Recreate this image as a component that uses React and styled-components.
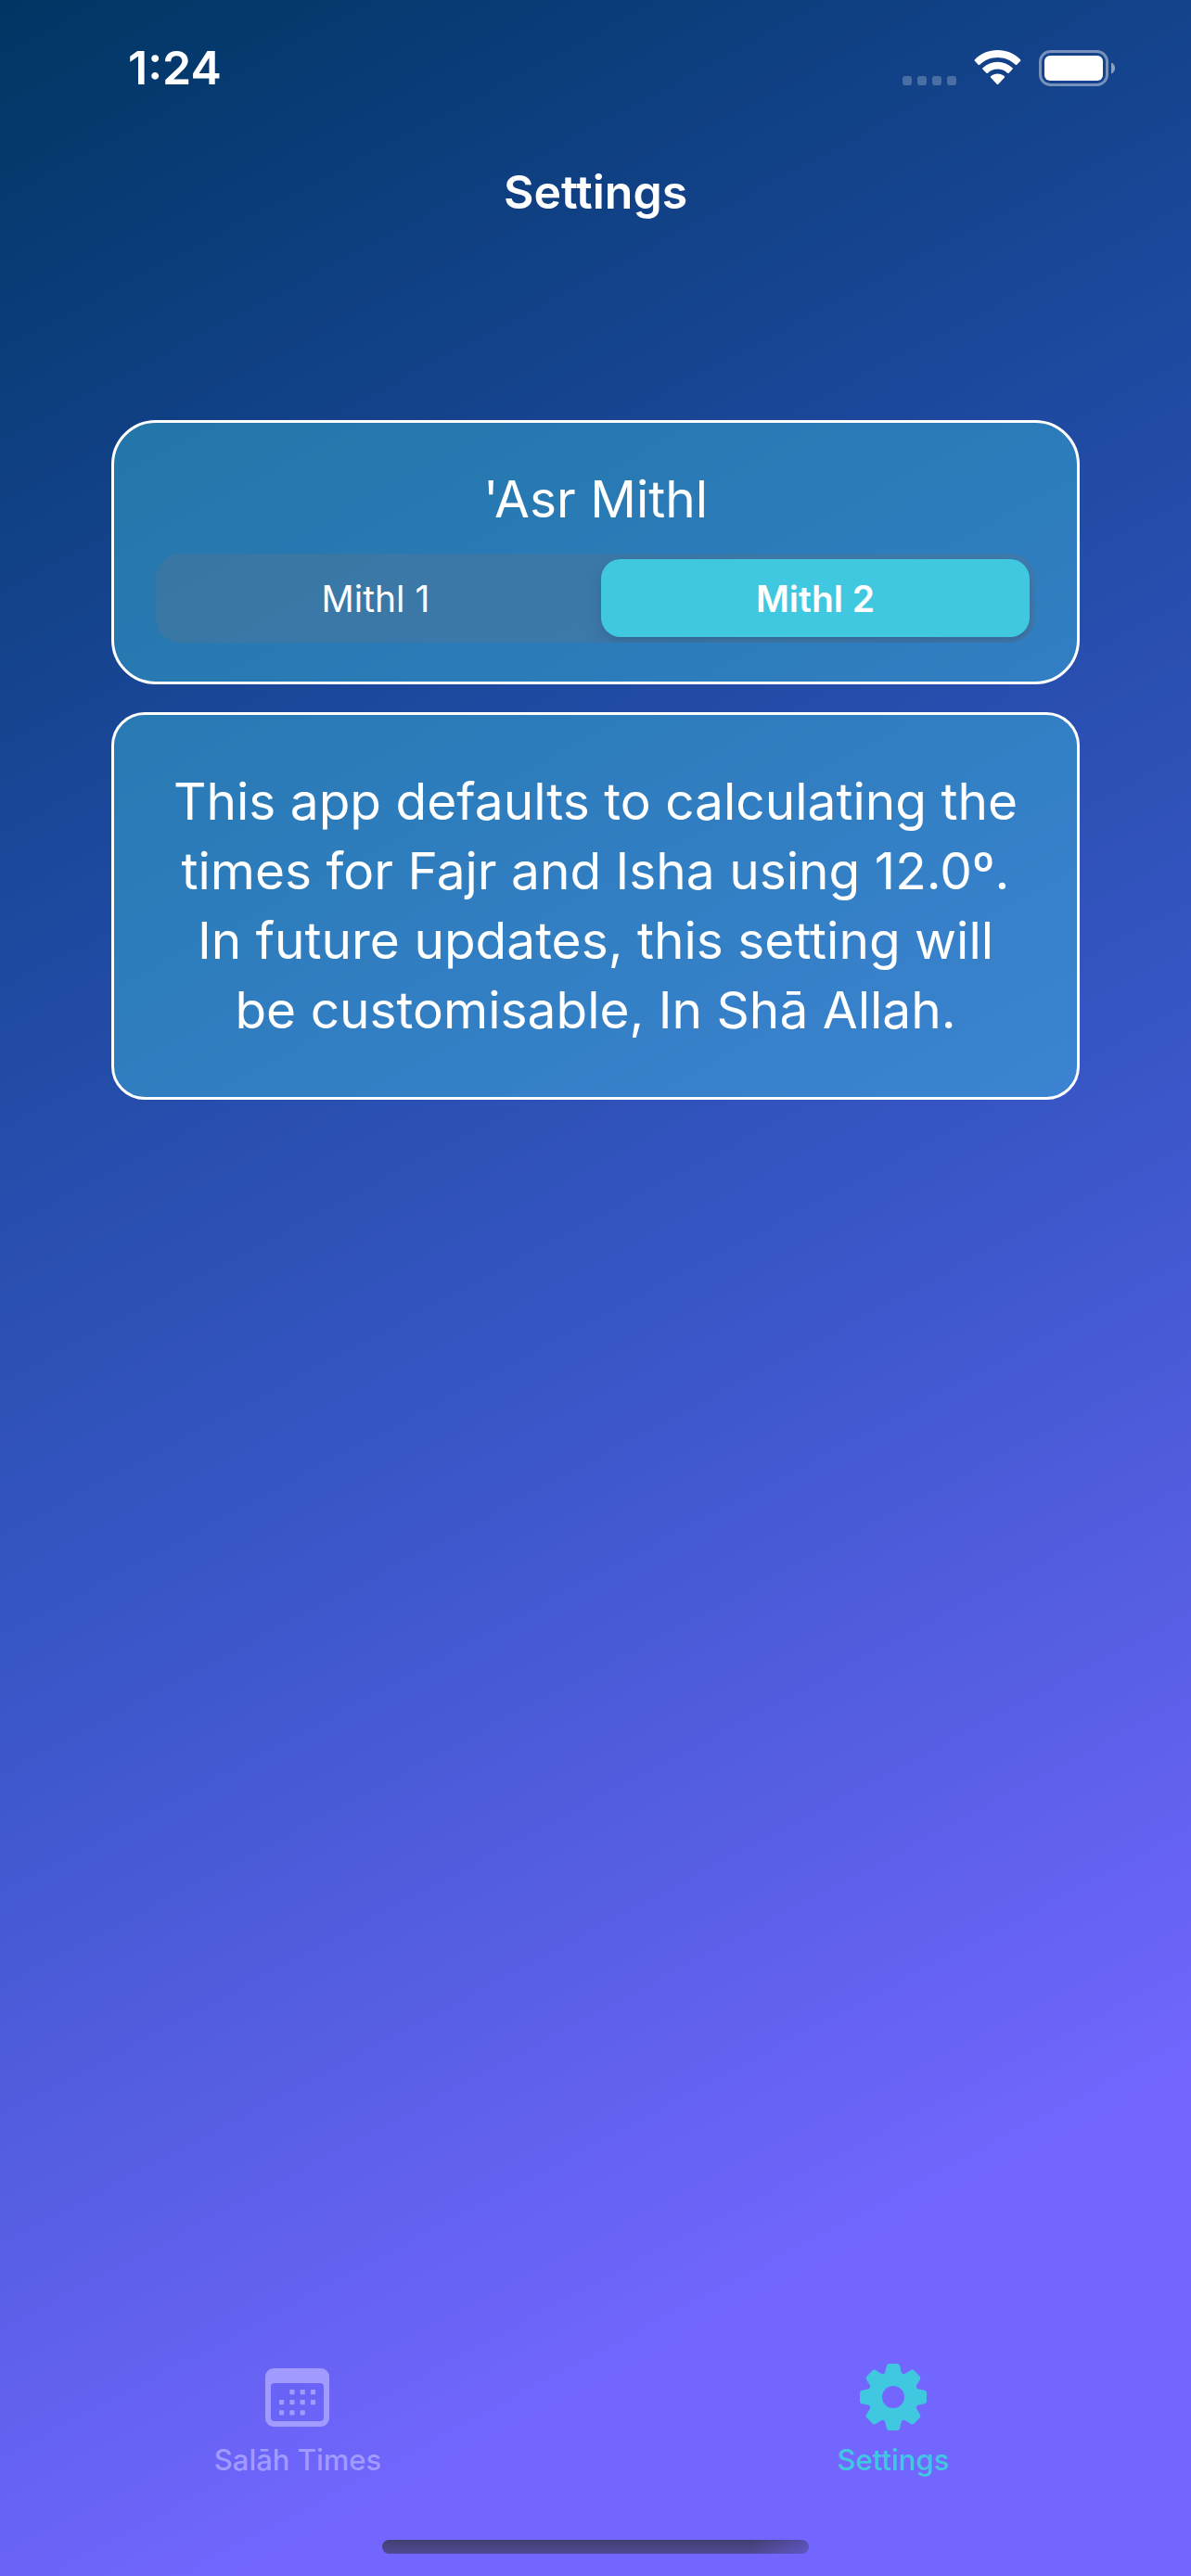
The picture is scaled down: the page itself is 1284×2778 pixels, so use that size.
import React, { useState } from "react";
import styled, { createGlobalStyle } from "styled-components";

const ACCENT = "#41c8e1";
const MUTED = "#a19bff";

const GlobalStyle = createGlobalStyle`
  *, *::before, *::after { box-sizing: border-box; }
  body {
    margin: 0;
    font-family: Inter, "Liberation Sans", sans-serif;
    color: #fff;
  }
`;

const Screen = styled.div`
  display: flex;
  flex-direction: column;
  min-height: 100vh;
  background: linear-gradient(152deg, #003663 0%, #0e3f80 14%, #1f4aa2 31%, #3856c6 52%, #7366ff 85%);
`;

const StatusBar = styled.div`
  display: flex;
  justify-content: space-between;
  align-items: center;
  height: 146px;
  padding: 0 81px 0 138px;
`;

const Clock = styled.time`
  font-size: 50px;
  font-weight: 600;
  line-height: 60px;
`;

const StatusIcons = styled.div`
  display: flex;
  align-items: center;
  gap: 19px;
`;

const SignalDots = styled.div`
  display: flex;
  align-self: flex-end;
  gap: 6px;
  padding-bottom: 1px;
`;

const Dot = styled.span`
  width: 10px;
  height: 10px;
  border-radius: 3px;
  background: rgba(255, 255, 255, 0.24);
`;

const NavBar = styled.header`
  display: flex;
  align-items: center;
  justify-content: center;
  height: 122px;
`;

const NavTitle = styled.h1`
  margin: 0;
  font-size: 50px;
  font-weight: 600;
  line-height: 60px;
`;

const Content = styled.main`
  display: flex;
  flex: 1;
  flex-direction: column;
  gap: 30px;
  padding: 185px 120px 60px;
`;

const Card = styled.section`
  display: flex;
  flex-direction: column;
  gap: 21px;
  padding: ${(p) => p.$padding};
  border: 3px solid #fff;
  border-radius: ${(p) => p.$radius};
  background: rgba(65, 200, 225, 0.4);
  text-align: center;
`;

const CardTitle = styled.h2`
  margin: 0;
  font-size: 55px;
  font-weight: 400;
  line-height: 75px;
`;

const CardText = styled.p`
  margin: 0;
  font-size: 55px;
  line-height: 75px;
`;

const Segments = styled.div`
  display: grid;
  grid-template-columns: 1fr 1fr;
  gap: 12px;
  height: 96px;
  padding: 6px;
  overflow: hidden;
  border-radius: 27px;
  background: rgba(118, 118, 128, 0.24);
`;

const Segment = styled.label`
  display: flex;
  align-items: center;
  justify-content: center;
  border-radius: 21px;
  font-size: 39px;
  font-weight: ${(p) => (p.$on ? 600 : 400)};
  background: ${(p) => (p.$on ? ACCENT : "transparent")};
  box-shadow: ${(p) => (p.$on ? "0 9px 24px rgba(0, 0, 0, 0.12), 0 3px 3px rgba(0, 0, 0, 0.04)" : "none")};
  cursor: pointer;
`;

const SegmentInput = styled.input`
  appearance: none;
  width: 0;
  height: 0;
  margin: 0;
`;

const TabBar = styled.nav`
  display: grid;
  grid-template-columns: 1fr 1fr;
  height: 210px;
  padding-top: 19px;
`;

const Tab = styled.a`
  display: flex;
  flex-direction: column;
  align-items: center;
  gap: 13px;
  color: ${(p) => (p.$on ? ACCENT : MUTED)};
  font-size: 31px;
  font-weight: 500;
  line-height: 36px;
  text-decoration: none;
`;

const TabIcon = styled.svg`
  display: block;
  width: 74px;
  height: 74px;
  fill: currentColor;
`;

const HomeArea = styled.footer`
  display: flex;
  justify-content: center;
  height: 39px;
`;

const HomeIndicator = styled.div`
  width: 460px;
  height: 15px;
  border-radius: 8px;
  background:
    linear-gradient(105deg, transparent 86%, rgba(115, 102, 255, 0.45) 100%),
    linear-gradient(#433e6f, #4f4a95);
`;

function WifiIcon() {
  return (
    <svg width="51" height="38" viewBox="0 0 51 38" fill="#fff" aria-hidden="true">
      <path d="M.9 10.2C7.600 3.600 16.200 0 25.500 0s17.900 3.600 24.600 10.200c.5.500.5 1.100 0 1.600l-3.800 3.900c-.5.500-1.100.5-1.600 0C39.400 10.600 32.700 7.900 25.500 7.900S11.600 10.600 6.300 15.700c-.5.500-1.100.5-1.600 0L.9 11.800c-.5-.5-.5-1.100 0-1.600z" />
      <path d="M9.500 19.200c4.400-4.100 10-6.400 16-6.400s11.600 2.300 16 6.400c.5.500.5 1.100 0 1.600l-3.900 3.900c-.5.500-1.100.5-1.600 0-2.900-2.600-6.600-4.100-10.500-4.100S17.900 22.100 15 24.700c-.5.500-1.100.5-1.600 0l-3.900-3.900c-.5-.5-.5-1.100 0-1.600z" />
      <path d="M18.300 28.100c2-1.600 4.500-2.500 7.200-2.500s5.200.9 7.200 2.500c.5.500.6 1.100.1 1.600l-6.500 7c-.5.500-1.100.5-1.600 0l-6.500-7c-.5-.5-.4-1.100.1-1.600z" />
    </svg>
  );
}

function BatteryIcon() {
  return (
    <svg width="83" height="39" viewBox="0 0 83 39" aria-hidden="true">
      <rect x="1.500" y="1.500" width="72" height="36" rx="11" fill="none" stroke="#fff" strokeWidth="3" opacity="0.42" />
      <rect x="6" y="6" width="63" height="27" rx="6" fill="#fff" />
      <path d="M78 13.500c2.600 1 4 3.400 4 6s-1.400 5-4 6z" fill="#fff" opacity="0.5" />
    </svg>
  );
}

const CALENDAR_DOTS = [
  [1, 0], [2, 0], [3, 0],
  [0, 1], [1, 1], [2, 1], [3, 1],
  [0, 2], [1, 2], [2, 2],
];

function CalendarIcon() {
  return (
    <TabIcon viewBox="0 0 74 74" aria-hidden="true">
      <path
        fillRule="evenodd"
        d="M11 6h51a9 9 0 0 1 9 9v45a9 9 0 0 1-9 9H11a9 9 0 0 1-9-9V15a9 9 0 0 1 9-9zM12 22a4 4 0 0 0-4 4v33a4 4 0 0 0 4 4h49a4 4 0 0 0 4-4V26a4 4 0 0 0-4-4z"
      />
      {CALENDAR_DOTS.map(([col, row]) => (
        <rect key={`${col}-${row}`} x={17 + col * 11.3} y={29 + row * 11.1} width="5.200" height="5.200" rx="0.800" />
      ))}
    </TabIcon>
  );
}

const TEETH = [0, 45, 90, 135, 180, 225, 270, 315];

function GearIcon() {
  return (
    <TabIcon viewBox="-37 -37 74 74" aria-hidden="true">
      <circle r="19" fill="none" stroke="currentColor" strokeWidth="14" />
      {TEETH.map((angle) => (
        <path
          key={angle}
          transform={`rotate(${angle})`}
          d="M-4.500-36h9Q6.600-36 7.200-33.500L8.800-26.500Q9.200-25 12-24.200L9-20H-9L-12-24.200Q-9.200-25-8.800-26.500L-7.200-33.500Q-6.600-36-4.500-36z"
        />
      ))}
    </TabIcon>
  );
}

const OPTIONS = ["Mithl 1", "Mithl 2"];

export default function App() {
  const [mithl, setMithl] = useState("Mithl 2");

  return (
    <>
      <GlobalStyle />
      <Screen>
        <StatusBar>
          <Clock>1:24</Clock>
          <StatusIcons>
            <SignalDots>
              <Dot />
              <Dot />
              <Dot />
              <Dot />
            </SignalDots>
            <WifiIcon />
            <BatteryIcon />
          </StatusIcons>
        </StatusBar>
        <NavBar>
          <NavTitle>Settings</NavTitle>
        </NavBar>
        <Content>
          <Card $padding="45px 45px 42px" $radius="48px">
            <CardTitle id="mithl-title">'Asr Mithl</CardTitle>
            <Segments role="radiogroup" aria-labelledby="mithl-title">
              {OPTIONS.map((option) => (
                <Segment key={option} $on={mithl === option}>
                  <SegmentInput
                    type="radio"
                    name="mithl"
                    value={option}
                    checked={mithl === option}
                    onChange={() => setMithl(option)}
                  />
                  {option}
                </Segment>
              ))}
            </Segments>
          </Card>
          <Card $padding="56px" $radius="36px">
            <CardText>
              This app defaults to calculating the times for Fajr and Isha using 12.0º. In future
              updates, this setting will be customisable, In Shā Allah.
            </CardText>
          </Card>
        </Content>
        <TabBar>
          <Tab href="#times">
            <CalendarIcon />
            Salāh Times
          </Tab>
          <Tab href="#settings" $on aria-current="page">
            <GearIcon />
            Settings
          </Tab>
        </TabBar>
        <HomeArea>
          <HomeIndicator />
        </HomeArea>
      </Screen>
    </>
  );
}
